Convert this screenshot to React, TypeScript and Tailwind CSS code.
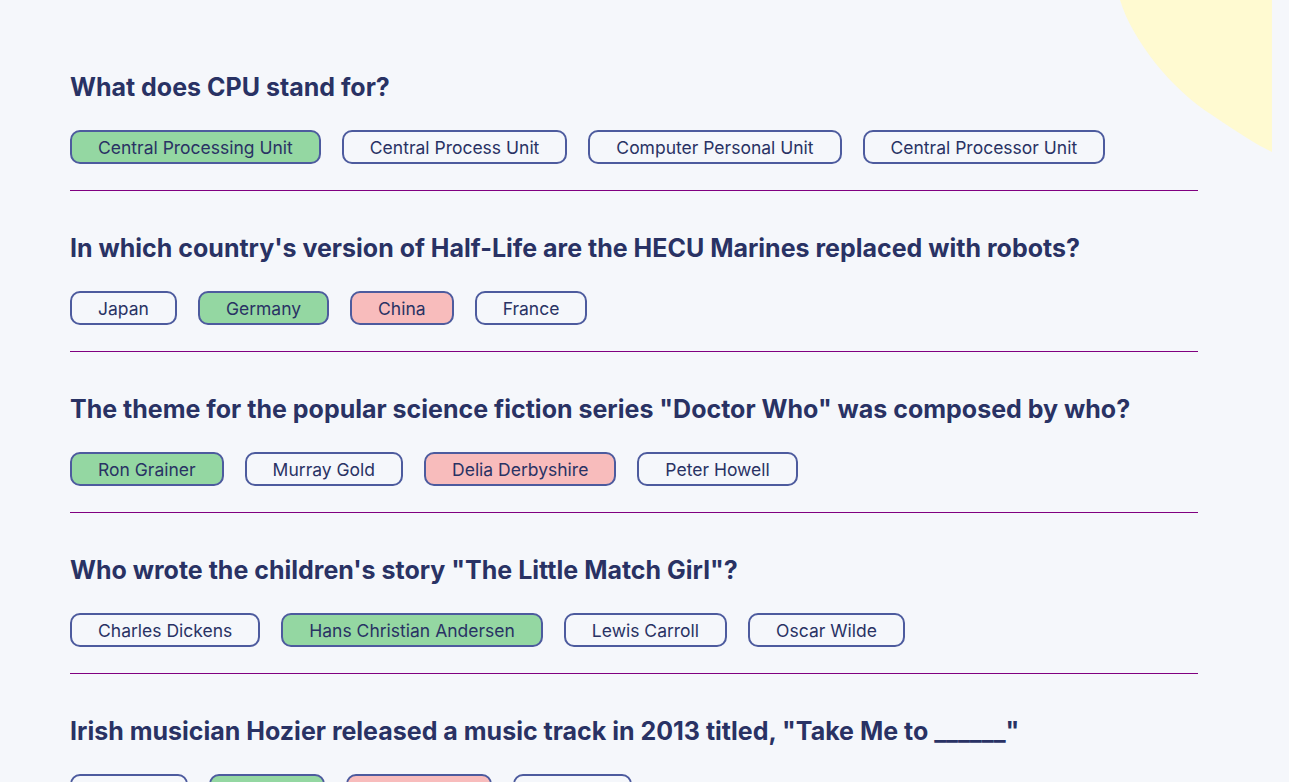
const questions = [
  {
    q: "What does CPU stand for?",
    answers: ["Central Processing Unit", "Central Process Unit", "Computer Personal Unit", "Central Processor Unit"],
    correct: 0,
    picked: 0,
  },
  {
    q: "In which country's version of Half-Life are the HECU Marines replaced with robots?",
    answers: ["Japan", "Germany", "China", "France"],
    correct: 1,
    picked: 2,
  },
  {
    q: "The theme for the popular science fiction series \"Doctor Who\" was composed by who?",
    answers: ["Ron Grainer", "Murray Gold", "Delia Derbyshire", "Peter Howell"],
    correct: 0,
    picked: 2,
  },
  {
    q: "Who wrote the children's story \"The Little Match Girl\"?",
    answers: ["Charles Dickens", "Hans Christian Andersen", "Lewis Carroll", "Oscar Wilde"],
    correct: 1,
    picked: 1,
  },
  {
    q: "Irish musician Hozier released a music track in 2013 titled, \"Take Me to ______\"",
    answers: ["London", "Church", "Tennessee", "Heaven"],
    correct: 1,
    picked: 2,
  },
  {
    q: "What is the largest planet in our solar system?",
    answers: ["Saturn", "Jupiter", "Neptune", "Earth"],
    correct: 1,
    picked: 1,
  },
  {
    q: "Which element has the chemical symbol \"Fe\"?",
    answers: ["Iron", "Fluorine", "Lead", "Francium"],
    correct: 0,
    picked: 3,
  },
  {
    q: "In what year was the first iPhone released?",
    answers: ["2005", "2006", "2007", "2008"],
    correct: 2,
    picked: 2,
  },
  {
    q: "Who painted the Mona Lisa?",
    answers: ["Michelangelo", "Raphael", "Leonardo da Vinci", "Donatello"],
    correct: 2,
    picked: 0,
  },
  {
    q: "How many sides does a hexagon have?",
    answers: ["Five", "Six", "Seven", "Eight"],
    correct: 1,
    picked: 1,
  },
];

function Answer({ text, state }: { text: string; state: "correct" | "wrong" | "none" }) {
  const bg =
    state === "correct" ? "bg-[#94d7a2]" : state === "wrong" ? "bg-[#f8bcbc]" : "bg-transparent";
  return (
    <button
      className={`h-[34px] px-[26px] pt-[2px] border-2 border-[#4d5b9e] rounded-[10px] text-[17.5px] text-[#293264] leading-none ${bg}`}
    >
      {text}
    </button>
  );
}

export default function App() {
  return (
    <div
      className="relative h-screen bg-[#f5f7fb] overflow-y-scroll"
      style={{ fontFamily: "Inter, 'Noto Sans', sans-serif" }}
    >
      {/* decorative blob, top right (left of the 17px scrollbar gutter) */}
      <svg className="absolute top-0 right-[17px]" width="160" height="160" viewBox="0 0 160 160">
        <path d="M8 0 C20 40 60 90 100 115 C125 132 145 145 160 152 L160 0 Z" fill="#fffad1" />
      </svg>

      <main className="relative pl-[70px] pr-[91px] pt-[72px] pb-[60px]">
        {questions.map((item, i) => (
          <section key={i} className={i === 0 ? "" : "pt-[42px]"}>
            <h2 className="text-[25px] leading-[30px] font-bold text-[#293264]">{item.q}</h2>
            <div className="mt-[28px] flex gap-[21px]">
              {item.answers.map((a, j) => (
                <Answer
                  key={j}
                  text={a}
                  state={j === item.correct ? "correct" : j === item.picked ? "wrong" : "none"}
                />
              ))}
            </div>
            <div className="mt-[26px] h-px bg-[#800080]"></div>
          </section>
        ))}
        <div className="flex items-center justify-center gap-5 pt-[42px]">
          <p className="text-[16px] font-bold text-[#293264]">You scored 5/10 correct answers</p>
          <button className="h-[40px] px-[24px] rounded-[15px] bg-[#4d5b9e] text-white text-[14px]">Play again</button>
        </div>
      </main>
    </div>
  );
}
